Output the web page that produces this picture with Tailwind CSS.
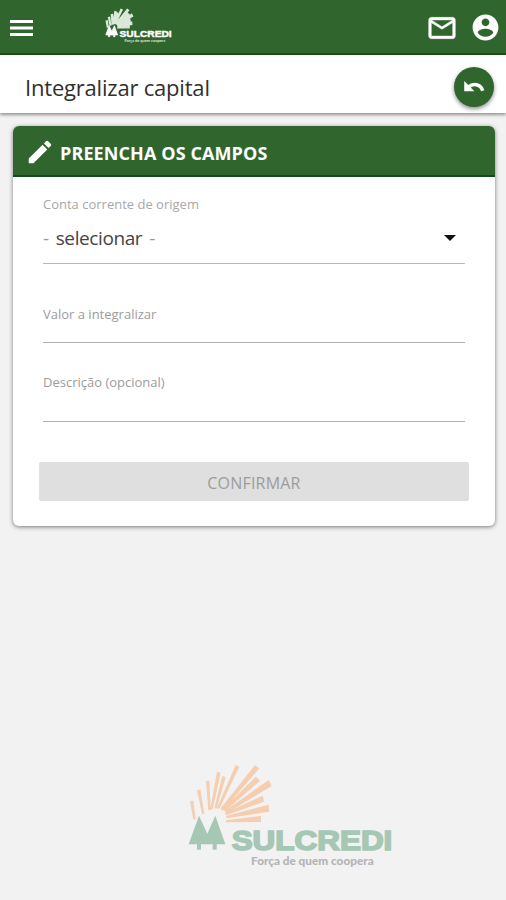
<!DOCTYPE html>
<html lang="pt-BR">
<head>
<meta charset="utf-8">
<title>Integralizar capital</title>
<script src="https://cdn.jsdelivr.net/npm/@tailwindcss/browser@4"></script>
</head>
<body class="flex h-[900px] w-[506px] flex-col overflow-hidden bg-[#f2f2f2] font-['Open_Sans','Noto_Sans',sans-serif]">
<svg class="hidden">
  <symbol id="rays" viewBox="0 0 660 360">
    <path d="M30 139l10-2 7 54-7 3zM51 106l10-3 12 73-7 1zM78 78l10-1 4 89-7 0zM111 50l11 3-24 110-7-1zM127 63l10 3-27 95-7-2zM167 30l11 5-60 126-7-2zM225 30l13 10-110 127-7-6zM228 65l12 12-105 92-7-7zM266 75l9 18-136 82-5-7zM248 122l4 18-113 41-4-7zM266 149l2 21-127 20-3-7zM243 183v18l-105 1v-6z"/>
  </symbol>
  <symbol id="trees" viewBox="0 0 660 360">
    <path d="M57 182L82 236 106 182 136 268H110V284H98V268H63V284H51V268H26z"/>
  </symbol>
</svg>
<header class="flex h-[55px] shrink-0 items-center border-b-2 border-[#17501b] bg-[#30662e] pr-[8px] pl-[10px]">
  <svg class="mt-[3px] h-4 w-[23px]" viewBox="0 0 23 16" fill="#fff"><path d="M0 0h23v3H0zM0 6.5h23v3H0zM0 13h23v3H0z"/></svg>
  <svg class="mt-[-3px] ml-[70px] h-[39px] w-[71px]" viewBox="0 0 660 360" fill="#fff">
    <use href="#rays" fill="#dce8dc" stroke="#dce8dc" stroke-width="12"/>
    <use href="#trees" stroke="#fff" stroke-width="7"/>
    <text x="154" y="284" font-family="Liberation Sans, sans-serif" font-weight="700" font-size="89" textLength="484" lengthAdjust="spacingAndGlyphs" stroke="#fff" stroke-width="4">SULCREDI</text>
    <text x="200" y="331" font-family="Lato, sans-serif" font-weight="700" font-size="36" textLength="378" lengthAdjust="spacingAndGlyphs" fill="#dce8dc">Força de quem coopera</text>
  </svg>
  <svg class="mt-[2px] ml-auto h-[32px] w-[32px]" viewBox="0 0 24 24" fill="#fff" stroke="#fff" stroke-width=".3"><path d="M22 6c0-1.1-.9-2-2-2H4c-1.100 0-2 .9-2 2v12c0 1.100.9 2 2 2h16c1.100 0 2-.9 2-2V6zm-2 0l-8 5-8-5h16zm0 12H4V8l8 5 8-5v10z"/></svg>
  <svg class="mt-[2px] -mr-[3px] ml-[12px] h-[31px] w-[31px]" viewBox="0 0 24 24" fill="#fff"><path d="M12 2C6.480 2 2 6.480 2 12s4.480 10 10 10 10-4.480 10-10S17.520 2 12 2zm0 3c1.660 0 3 1.340 3 3s-1.340 3-3 3-3-1.340-3-3 1.340-3 3-3zm0 14.200c-2.500 0-4.710-1.280-6-3.220.03-1.990 4-3.080 6-3.080 1.990 0 5.970 1.090 6 3.080-1.290 1.940-3.500 3.220-6 3.220z"/></svg>
</header>
<div class="flex h-[58px] shrink-0 items-center justify-between bg-white pr-[12px] pl-[25px] shadow-[0_2px_3px_rgba(0,0,0,0.38)]">
  <h1 class="mt-[6px] text-[22px] leading-[30px] tracking-[-0.2px] whitespace-nowrap text-[#303030]">Integralizar capital</h1>
  <button class="mt-[5px] flex size-10 items-center justify-center rounded-full bg-[#30662e] shadow-[0_2px_4px_rgba(0,0,0,0.45)]">
    <svg class="size-[22px]" viewBox="0 0 24 24" fill="#fff"><path d="M12.500 8c-2.650 0-5.050.99-6.900 2.600L2 7v9h9l-3.620-3.620c1.390-1.160 3.160-1.880 5.120-1.880 3.540 0 6.550 2.310 7.600 5.500l2.370-.78C21.080 11.030 17.150 8 12.500 8z" stroke="#fff" stroke-width="1.2"/></svg>
  </button>
</div>
<main class="mt-[13px] ml-[13px] flex h-[400px] w-[482px] shrink-0 flex-col overflow-hidden rounded-[6px] bg-white shadow-[0_1px_4px_rgba(0,0,0,0.5)]">
  <div class="flex h-[51px] shrink-0 items-center border-b-2 border-[#124d17] bg-[#30662e] pl-[12px]">
    <svg class="mt-[3px] size-[30px]" viewBox="0 0 24 24" fill="#fff"><path d="M3 17.250V21h3.750L17.810 9.940l-3.750-3.750L3 17.250zM20.710 7.040a1 1 0 0 0 0-1.410l-2.340-2.340a1 1 0 0 0-1.410 0l-1.830 1.830 3.750 3.750 1.830-1.830z"/></svg>
    <h2 class="mt-[4px] ml-[5px] text-[18px] leading-6 font-bold tracking-[0.1px] whitespace-nowrap text-white">PREENCHA OS CAMPOS</h2>
  </div>
  <div class="flex flex-col px-[30px] pt-[17px]">
    <label class="h-5 text-[13px] leading-5 whitespace-nowrap text-[#a8a8a8]">Conta corrente de origem</label>
    <div class="flex h-[50px] items-start justify-between border-b border-[#b8b8b8] pt-[10px] pr-[9px]">
      <span class="flex gap-[7px] text-[19px] leading-7 tracking-[-0.4px] whitespace-nowrap text-[#444]"><span class="text-[#999]">-</span><span>selecionar</span><span class="text-[#999]">-</span></span>
      <svg class="mt-[11px] h-[6px] w-3" viewBox="0 0 12 6" fill="#111"><path d="M0 0h12L6 6z"/></svg>
    </div>
    <label class="mt-[40px] h-[39px] border-b border-[#b0b0b0] text-[13px] leading-5 whitespace-nowrap text-[#9c9c9c]">Valor a integralizar</label>
    <label class="mt-[29px] h-[50px] border-b border-[#b0b0b0] text-[13px] leading-5 whitespace-nowrap text-[#9c9c9c]">Descrição (opcional)</label>
    <button class="-mx-[4px] mt-[40px] h-[39px] rounded-[2px] bg-[#dfdfdf] pt-[2px] text-[16px] tracking-[0.2px] text-[#9c9c9c]">CONFIRMAR</button>
  </div>
</main>
<footer class="mt-auto mb-[25px] ml-[180px] h-[120px] w-[220px] shrink-0">
  <svg class="h-full w-full" viewBox="0 0 660 360">
    <use href="#rays" fill="#f5ceaf"/>
    <use href="#trees" fill="#a6c7b4"/>
    <text x="155" y="284" font-family="Liberation Sans, sans-serif" font-weight="700" font-size="85" textLength="482" lengthAdjust="spacingAndGlyphs" fill="#a6c7b4" stroke="#a6c7b4" stroke-width="5">SULCREDI</text>
    <text x="213" y="331" font-family="Lato, sans-serif" font-weight="900" font-size="34" textLength="368" lengthAdjust="spacingAndGlyphs" fill="#b4b4b8">Força de quem coopera</text>
  </svg>
</footer>
</body>
</html>
